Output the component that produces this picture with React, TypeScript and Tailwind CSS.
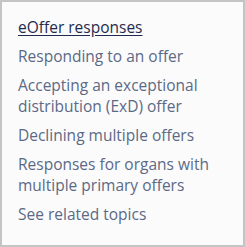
const LINKS = [
  'Responding to an offer',
  'Accepting an exceptional distribution (ExD) offer',
  'Declining multiple offers',
  'Responses for organs with multiple primary offers',
  'See related topics',
]

export default function App() {
  return (
    <div className="w-[245px] h-[247px] border-2 border-[#c4c4c4] bg-[#fbfbfc] px-4 pt-[15px]" style={{ fontFamily: '"Open Sans", sans-serif' }}>
      <ul className="flex flex-col gap-2 text-[15.5px] leading-[21px] text-[#5b6985]">
        <li>
          <a className="text-[#1f2b4d] underline underline-offset-2">eOffer responses</a>
        </li>
        {LINKS.map((l) => (
          <li key={l}>{l}</li>
        ))}
      </ul>
    </div>
  )
}
